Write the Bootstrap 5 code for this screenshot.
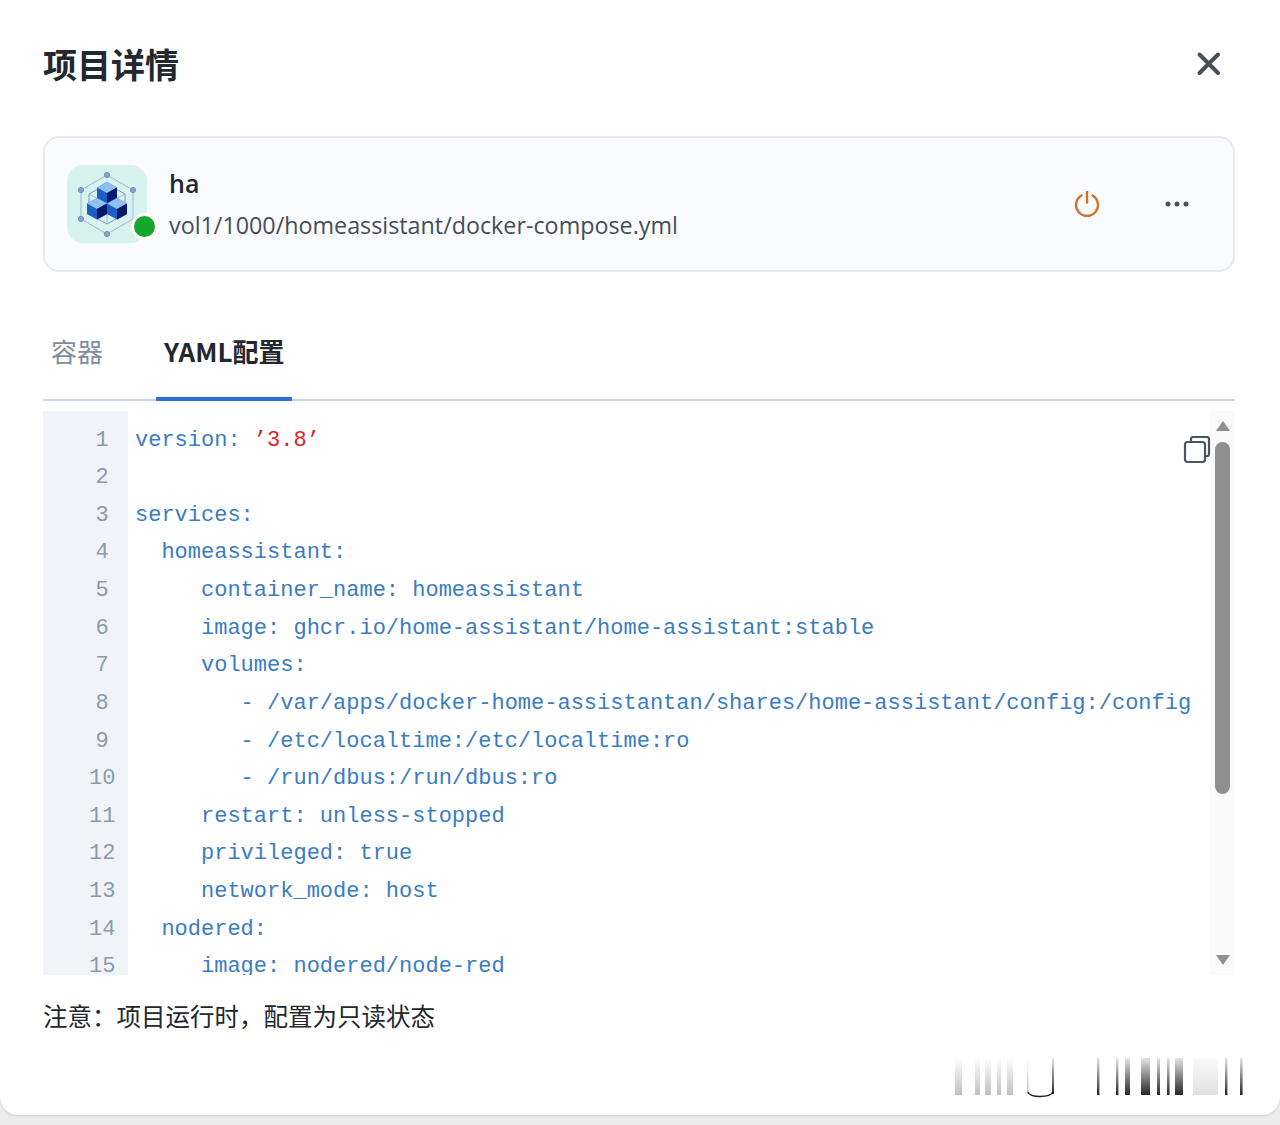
<!DOCTYPE html>
<html lang="zh-CN">
<head>
<meta charset="utf-8">
<title>项目详情</title>
<link href="https://cdn.jsdelivr.net/npm/bootstrap@5.3.0/dist/css/bootstrap.min.css" rel="stylesheet">
<style>
html,body{height:100%;}
body{background:#ececec;font-family:"Open Sans","Noto Sans CJK SC",sans-serif;color:#23272e;}
.sheet{height:1115px;background:#fff;border-radius:0 0 18px 18px;padding:0 45px 0 43px;position:relative;box-shadow:0 1px 2px rgba(0,0,0,.12);overflow:hidden;}
.head-row{height:136px;padding-bottom:8px;}
.head-title{font-size:34px;font-weight:700;margin:0;color:#23272e;line-height:1.2;font-family:"Noto Sans CJK SC",sans-serif;}
.close-svg{margin-right:14px;display:block;}
.proj-card{height:136px;background:#fafbfe;border:2px solid #e5e8ee;border-radius:16px;padding:0 44px 0 22px;}
.logo-wrap{position:relative;width:80px;height:78px;margin-right:22px;}
.logo-bg{display:block;}
.status-dot{position:absolute;left:64px;top:48px;width:27px;height:27px;border-radius:50%;background:#16a62c;border:3px solid #fff;}
.proj-name{font-size:25px;font-weight:600;line-height:34px;color:#23272e;margin-top:1px;}
.proj-path{font-size:23.3px;line-height:38px;color:#474d57;margin-top:6px;}
.act-gap{gap:65px;}
.tab-bar{margin-top:56px;height:73px;border-bottom:2px solid #c9d6e2;flex-wrap:nowrap;}
.tab-item{font-size:26px;line-height:46px;padding:0 8px;color:#7f8e9c;height:73px;font-family:"Noto Sans CJK SC",sans-serif;margin-bottom:-2px;}
.tab-item.is-on{color:#23272e;font-weight:700;border-bottom:4px solid #2a6fdb;margin-left:45px;}
.editor{height:564px;margin-top:10px;position:relative;overflow:hidden;}
.gutter{width:85px;background:#f0f4f9;padding-left:47px;padding-top:10.5px;flex:none;}
.gutter-num{width:26.4px;text-align:center;color:#8b9aa8;margin-left:-1px;}
.code-line,.gutter-num{font-family:"Liberation Mono",monospace;font-size:22px;line-height:37.64px;height:37.64px;white-space:pre;}
.code-body{padding:10.5px 0 0 7px;color:#3a7cc4;flex:1;min-width:0;}
.str-val{color:#e0222e;}
.copy-svg{position:absolute;right:24px;top:24px;}
.scroll-rail{width:25px;background:#fafafa;flex:none;position:relative;}
.scroll-up,.scroll-down{position:absolute;left:6px;width:0;height:0;border-left:7px solid transparent;border-right:7px solid transparent;}
.scroll-up{top:10px;border-bottom:10px solid #8f8f8f;}
.scroll-down{bottom:10px;border-top:10px solid #8f8f8f;}
.scroll-thumb{position:absolute;left:5px;top:31px;width:15px;height:352px;background:#8f8f8f;border-radius:8px;}
.note-line{font-size:24.5px;line-height:36px;margin-top:23px;color:#23272e;font-family:"Noto Sans CJK SC",sans-serif;}
.smear{position:absolute;left:950px;top:1056px;filter:blur(.6px);}
</style>
</head>
<body>
<div class="sheet">
  <div class="head-row d-flex align-items-center justify-content-between">
    <h1 class="head-title">项目详情</h1>
    <svg class="close-svg" width="26" height="26" viewBox="0 0 26 26" aria-label="关闭"><path d="M4.5 3.5L23 22M23 3.5L4.5 22" stroke="#474f5b" stroke-width="4" stroke-linecap="round" fill="none"/></svg>
  </div>

  <div class="proj-card d-flex align-items-center">
    <div class="logo-wrap flex-none">
      <svg class="logo-bg" width="80" height="78" viewBox="0 0 80 78">
        <rect width="80" height="78" rx="16" fill="#d8f2ee"/>
        <g fill="none" stroke="#9db9d6" stroke-width="1">
          <path d="M40 10L66 25V54L40 69L14 54V25Z"/>
          <path d="M40 19L58 29V49L40 59L22 49V29Z" stroke="#7f9cc0"/>
          <path d="M22 29L40 39L58 29M40 39V59"/>
        </g>
        <g fill="#82a6d0" stroke="#6e93c4"><circle cx="40" cy="10" r="2.6"/><circle cx="66" cy="25" r="2.6"/><circle cx="14" cy="25" r="2.6"/><circle cx="14" cy="54" r="2.6"/><circle cx="40" cy="69" r="2.6"/></g>
        <g>
          <path d="M40 17L50 22.5V33L40 38.5L30 33V22.5Z" fill="#1a5fc8"/><path d="M40 17L50 22.5L40 28L30 22.5Z" fill="#8ec1f2"/><path d="M40 28L50 22.5V33L40 38.5Z" fill="#0b1a66"/>
          <path d="M30 33L40 38.5V49L30 54.5L20 49V38.5Z" fill="#1a5fc8"/><path d="M30 33L40 38.5L30 44L20 38.5Z" fill="#8ec1f2"/><path d="M30 44L40 38.5V49L30 54.5Z" fill="#0b1a66"/>
          <path d="M50 33L60 38.5V49L50 54.5L40 49V38.5Z" fill="#1a5fc8"/><path d="M50 33L60 38.5L50 44L40 38.5Z" fill="#8ec1f2"/><path d="M50 44L60 38.5V49L50 54.5Z" fill="#0b1a66"/>
        </g>
      </svg>
      <span class="status-dot"></span>
    </div>
    <div class="flex-grow-1">
      <div class="proj-name">ha</div>
      <div class="proj-path">vol1/1000/homeassistant/docker-compose.yml</div>
    </div>
    <div class="d-flex align-items-center act-gap">
      <svg width="26" height="26" viewBox="0 1 26 26" aria-label="电源"><path d="M7.5 5.5A11 11 0 1 0 18.5 5.5" fill="none" stroke="#d2702a" stroke-width="2.4" stroke-linecap="round"/><path d="M13 1.5V12.5" stroke="#d2702a" stroke-width="2.4" stroke-linecap="round"/></svg>
      <svg width="24" height="6" viewBox="0 0 24 6" aria-label="更多"><circle cx="3" cy="3" r="2.5" fill="#4b5160"/><circle cx="12" cy="3" r="2.5" fill="#4b5160"/><circle cx="21" cy="3" r="2.5" fill="#4b5160"/></svg>
    </div>
  </div>

  <div class="tab-bar d-flex">
    <div class="tab-item">容器</div>
    <div class="tab-item is-on">YAML配置</div>
  </div>

  <div class="editor d-flex">
    <div class="gutter"><div class="gutter-num">1</div><div class="gutter-num">2</div><div class="gutter-num">3</div><div class="gutter-num">4</div><div class="gutter-num">5</div><div class="gutter-num">6</div><div class="gutter-num">7</div><div class="gutter-num">8</div><div class="gutter-num">9</div><div class="gutter-num">10</div><div class="gutter-num">11</div><div class="gutter-num">12</div><div class="gutter-num">13</div><div class="gutter-num">14</div><div class="gutter-num">15</div></div>
    <div class="code-body">
<div class="code-line">version: <span class="str-val">’3.8’</span></div>
<div class="code-line"> </div>
<div class="code-line">services:</div>
<div class="code-line">  homeassistant:</div>
<div class="code-line">     container_name: homeassistant</div>
<div class="code-line">     image: ghcr.io/home-assistant/home-assistant:stable</div>
<div class="code-line">     volumes:</div>
<div class="code-line">        - /var/apps/docker-home-assistantan/shares/home-assistant/config:/config</div>
<div class="code-line">        - /etc/localtime:/etc/localtime:ro</div>
<div class="code-line">        - /run/dbus:/run/dbus:ro</div>
<div class="code-line">     restart: unless-stopped</div>
<div class="code-line">     privileged: true</div>
<div class="code-line">     network_mode: host</div>
<div class="code-line">  nodered:</div>
<div class="code-line">     image: nodered/node-red</div>
    </div>
    <div class="scroll-rail"><span class="scroll-up"></span><span class="scroll-thumb"></span><span class="scroll-down"></span></div>
    <svg class="copy-svg" width="28" height="29" viewBox="0 0 28 29" aria-label="复制"><path d="M8 6V4a2 2 0 0 1 2-2h14a2 2 0 0 1 2 2v15a2 2 0 0 1-2 2h-2" fill="none" stroke="#4a5561" stroke-width="2.2"/><rect x="2" y="7" width="20" height="20" rx="2.5" fill="#fff" stroke="#4a5561" stroke-width="2.2"/></svg>
  </div>

  <p class="note-line mb-0">注意&#xFF1A;项目运行时&#xFF0C;配置为只读状态</p>

  <svg class="smear" width="300" height="46" viewBox="950 1056 300 46" aria-hidden="true">
    <defs>
      <linearGradient id="gl" x1="0" y1="0" x2="0" y2="1"><stop offset="0" stop-color="#000" stop-opacity="0"/><stop offset="1" stop-color="#000" stop-opacity=".25"/></linearGradient>
      <linearGradient id="gd" x1="0" y1="0" x2="0" y2="1"><stop offset="0" stop-color="#000" stop-opacity=".1"/><stop offset="1" stop-color="#000" stop-opacity=".85"/></linearGradient>
      <linearGradient id="gs" x1="0" y1="0" x2="0" y2="1"><stop offset="0" stop-color="#000" stop-opacity=".02"/><stop offset="1" stop-color="#000" stop-opacity=".12"/></linearGradient>
    </defs>
    <g fill="url(#gl)"><rect x="955" y="1058" width="7" height="37"/><rect x="975" y="1058" width="5" height="37"/><rect x="985" y="1058" width="6" height="37"/><rect x="997" y="1058" width="4" height="37"/><rect x="1007" y="1058" width="6" height="37"/><rect x="1027" y="1058" width="1.5" height="36"/></g>
    <path d="M1028 1092c2 6 22 6 25 0" fill="none" stroke="#222" stroke-width="1.4"/>
    <g fill="url(#gd)"><rect x="1052" y="1058" width="2" height="36"/><rect x="1097" y="1058" width="2.4" height="37"/><rect x="1116" y="1058" width="2.4" height="37"/><rect x="1125" y="1058" width="5" height="37"/><rect x="1141" y="1058" width="9" height="37"/><rect x="1157" y="1058" width="3" height="37"/><rect x="1167" y="1058" width="2.6" height="37"/><rect x="1175" y="1058" width="8" height="37"/><rect x="1225" y="1058" width="2.4" height="37"/><rect x="1240" y="1058" width="2.6" height="37"/></g>
    <rect x="1193" y="1058" width="25" height="37" fill="url(#gs)"/>
  </svg>
</div>
<script src="https://cdn.jsdelivr.net/npm/bootstrap@5.3.0/dist/js/bootstrap.bundle.min.js"></script>
</body>
</html>
